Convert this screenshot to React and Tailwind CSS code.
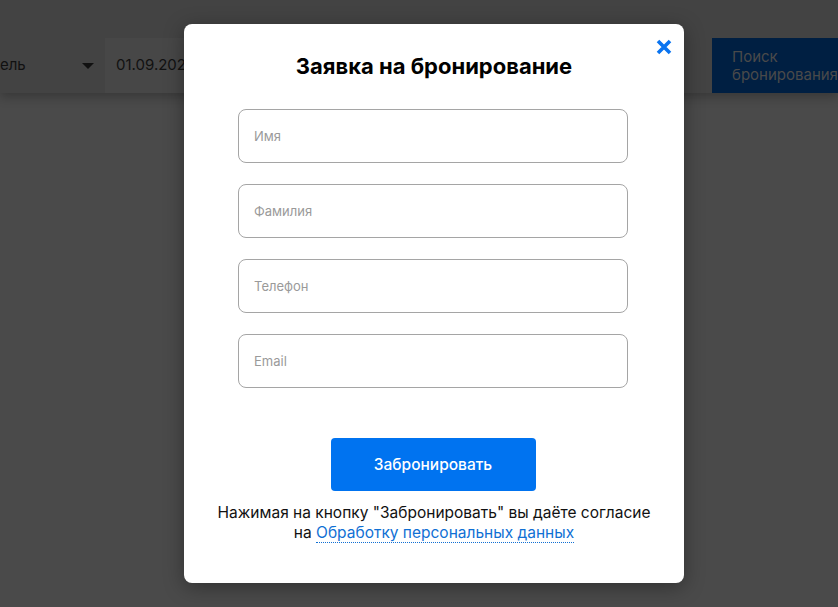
import React from "react";

const fields = ["Имя", "Фамилия", "Телефон", "Email"];

const App = () => {
  return (
    <div
      className="relative w-[838px] h-[607px] overflow-hidden bg-[#4a4a4a]"
      style={{ fontFamily: "Inter, 'Noto Sans', sans-serif" }}
    >
      {/* page header under the overlay */}
      <div className="h-[93px] bg-[#434343] pt-[38px] flex shadow-[0_4px_10px_rgba(0,0,0,0.25)]">
        <div className="w-[105px] h-[55px] flex items-center justify-between pr-[11px]">
          <span className="text-[15px] text-[#111]">ель</span>
          <span className="w-0 h-0 border-l-[6px] border-r-[6px] border-t-[6px] border-l-transparent border-r-transparent border-t-[#111]" />
        </div>
        <div className="w-[200px] h-[55px] bg-[#474747] flex items-center pl-[11px]">
          <span className="text-[15px] text-[#111]">01.09.2023</span>
        </div>
        <div className="flex-1" />
        <div className="w-[126px] h-[55px] bg-[#001f42] pl-[20px] pt-[10px] text-[15px] leading-[18px] text-[#4a4a4a] whitespace-nowrap overflow-hidden">
          Поиск
          <br />
          бронирования
        </div>
      </div>

      {/* modal */}
      <div className="absolute left-[184px] top-[24px] w-[500px] h-[559px] bg-white rounded-lg shadow-[0_4px_20px_rgba(0,0,0,0.35)] flex flex-col items-center pt-[28px]">
        <button className="absolute right-[12px] top-[15px] w-[16px] h-[16px]">
          <svg viewBox="0 0 16 16" width="16" height="16">
            <path
              d="M2 2 L14 14 M14 2 L2 14"
              stroke="#0a74f0"
              strokeWidth="3.6"
              strokeLinecap="butt"
            />
          </svg>
        </button>

        <h2 className="text-[22px] leading-[28px] font-bold text-black">
          Заявка на бронирование
        </h2>

        <div className="mt-[29px] mr-[2px] flex flex-col gap-[21px]">
          {fields.map((f) => (
            <input
              key={f}
              placeholder={f}
              className="w-[390px] h-[54px] rounded-lg border border-[#a5a5a5] px-[15px] text-[13px] text-[#333] placeholder:text-[#9a9a9a] outline-none"
            />
          ))}
        </div>

        <button className="mt-[50px] mr-[2px] w-[205px] h-[53px] rounded bg-[#0073f0] text-white text-[15.5px] font-medium">
          Забронировать
        </button>

        <p className="mt-[12px] text-[15.5px] leading-[20px] text-[#111] text-center">
          Нажимая на кнопку "Забронировать" вы даёте согласие
          <br />
          на{" "}
          <a href="#" className="text-[#1070d4] border-b border-dotted border-[#1070d4]">
            Обработку персональных данных
          </a>
        </p>
      </div>
    </div>
  );
};

export default App;
